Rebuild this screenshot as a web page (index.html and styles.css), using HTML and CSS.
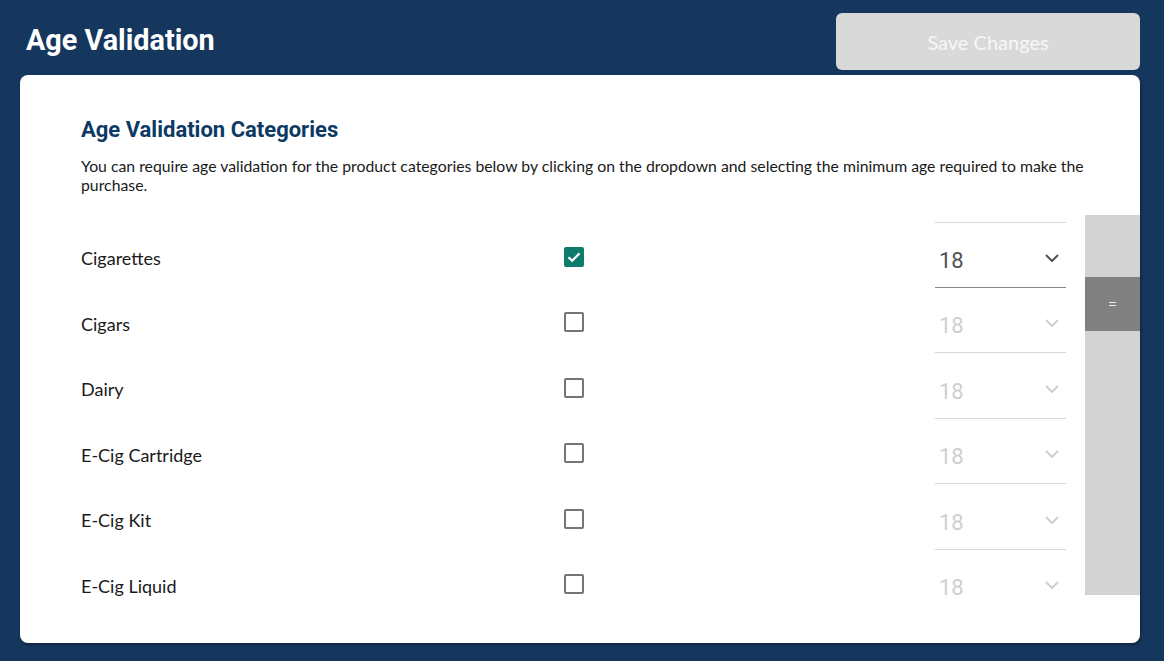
FILE: index.html
```html
<!DOCTYPE html>
<html>
<head>
<meta charset="utf-8">
<link rel="stylesheet" href="styles.css">
</head>
<body>
<header class="topbar">
  <h1 class="page-title">Age Validation</h1>
  <button class="save-btn" disabled>Save Changes</button>
</header>
<main class="card">
  <h2 class="section-title">Age Validation Categories</h2>
  <p class="section-desc">You can require age validation for the product categories below by clicking on the dropdown and selecting the minimum age required to make the purchase.</p>
  <div class="list-wrap">
    <div class="list">
      <div class="row">
        <span class="label">Cigarettes</span>
        <span class="checkbox checked"><svg viewBox="0 0 20 20" width="20" height="20"><path d="M4.5 10.2l3.6 3.6 7.4-7.4" fill="none" stroke="#fff" stroke-width="2.2"/></svg></span>
        <span></span>
        <div class="select first active"><span class="value">18</span><svg class="chev" viewBox="0 0 14 8" width="14" height="8"><path d="M1 1l6 6 6-6" fill="none" stroke="currentColor" stroke-width="2"/></svg></div>
      </div>
      <div class="row">
        <span class="label">Cigars</span>
        <span class="checkbox"></span>
        <span></span>
        <div class="select"><span class="value">18</span><svg class="chev" viewBox="0 0 14 8" width="14" height="8"><path d="M1 1l6 6 6-6" fill="none" stroke="currentColor" stroke-width="2"/></svg></div>
      </div>
      <div class="row">
        <span class="label">Dairy</span>
        <span class="checkbox"></span>
        <span></span>
        <div class="select"><span class="value">18</span><svg class="chev" viewBox="0 0 14 8" width="14" height="8"><path d="M1 1l6 6 6-6" fill="none" stroke="currentColor" stroke-width="2"/></svg></div>
      </div>
      <div class="row">
        <span class="label">E-Cig Cartridge</span>
        <span class="checkbox"></span>
        <span></span>
        <div class="select"><span class="value">18</span><svg class="chev" viewBox="0 0 14 8" width="14" height="8"><path d="M1 1l6 6 6-6" fill="none" stroke="currentColor" stroke-width="2"/></svg></div>
      </div>
      <div class="row">
        <span class="label">E-Cig Kit</span>
        <span class="checkbox"></span>
        <span></span>
        <div class="select"><span class="value">18</span><svg class="chev" viewBox="0 0 14 8" width="14" height="8"><path d="M1 1l6 6 6-6" fill="none" stroke="currentColor" stroke-width="2"/></svg></div>
      </div>
      <div class="row">
        <span class="label">E-Cig Liquid</span>
        <span class="checkbox"></span>
        <span></span>
        <div class="select"><span class="value">18</span><svg class="chev" viewBox="0 0 14 8" width="14" height="8"><path d="M1 1l6 6 6-6" fill="none" stroke="currentColor" stroke-width="2"/></svg></div>
      </div>
    </div>
    <div class="scrollbar">
      <div class="thumb"><span class="grip"></span></div>
    </div>
  </div>
</main>
</body>
</html>
```
FILE: styles.css
```css
* { box-sizing: border-box; }
html, body { margin: 0; padding: 0; }
body {
  background: #16375d;
  font-family: "Lato", "Liberation Sans", sans-serif;
  width: 1164px;
  height: 661px;
  overflow: hidden;
}
.topbar {
  display: flex;
  align-items: center;
  justify-content: space-between;
  padding: 13px 24px 5px 26px;
}
.page-title {
  margin: 0;
  font-family: "Roboto", "Liberation Sans", sans-serif;
  font-weight: 700;
  font-size: 28.8px;
  color: #ffffff;
  margin-top: -3px;
}
.save-btn {
  width: 304px;
  height: 57px;
  border: none;
  border-radius: 6px;
  background: #d9d9d9;
  color: #f7f7f7;
  font-family: "Lato", "Liberation Sans", sans-serif;
  font-size: 20px;
  padding: 0;
}
.card {
  display: block;
  margin: 0 24px 0 20px;
  height: 568px;
  background: #ffffff;
  border-radius: 8px;
  padding: 42px 0 0 61px;
  box-shadow: 1px 2px 3px rgba(0,0,0,0.35);
}
.section-title {
  margin: 0;
  font-family: "Roboto", "Liberation Sans", sans-serif;
  font-weight: 700;
  font-size: 22px;
  line-height: 26px;
  color: #0c3a64;
}
.section-desc {
  margin: 13px 0 0 0;
  max-width: 1012px;
  font-size: 15.8px;
  line-height: 19px;
  color: #1a1a1a;
}
.list-wrap {
  display: flex;
  align-items: flex-start;
  margin-top: 21px;
  gap: 19px;
}
.list {
  width: 985px;
  height: 386px;
  overflow: hidden;
  padding-top: 7px;
}
.row {
  display: grid;
  grid-template-columns: 483px 20px 1fr 131px;
  align-items: center;
  height: 65.5px;
}
.label {
  font-size: 18px;
  color: #1a1a1a;
  padding-top: 7px;
}
.checkbox {
  width: 20px;
  height: 20px;
  border: 2px solid #757575;
  border-radius: 2px;
  display: block;
  margin-top: 4px;
}
.checkbox.checked {
  border: none;
  background: #0e7c6c;
}
.checkbox svg { display: block; }
.select {
  height: 100%;
  display: flex;
  align-items: center;
  justify-content: space-between;
  padding: 12px 7px 0 4px;
  border-bottom: 1px solid #d6d6d6;
  color: #cfcfcf;
}
.select.first { border-top: 1px solid #d6d6d6; }
.select.active {
  color: #525252;
  border-bottom: 1px solid #8a8a8a;
}
.value {
  font-family: "Roboto", "Liberation Sans", sans-serif;
  font-size: 22px;
}
.chev { display: block; margin-top: -5px; }
.scrollbar {
  width: 55px;
  height: 380px;
  background: #d3d3d3;
  padding-top: 62px;
}
.thumb {
  height: 54px;
  background: #808080;
  display: flex;
  align-items: center;
  justify-content: center;
}
.grip {
  width: 7px;
  height: 4px;
  border-top: 1px solid #f0f0f0;
  border-bottom: 1px solid #f0f0f0;
}
```
